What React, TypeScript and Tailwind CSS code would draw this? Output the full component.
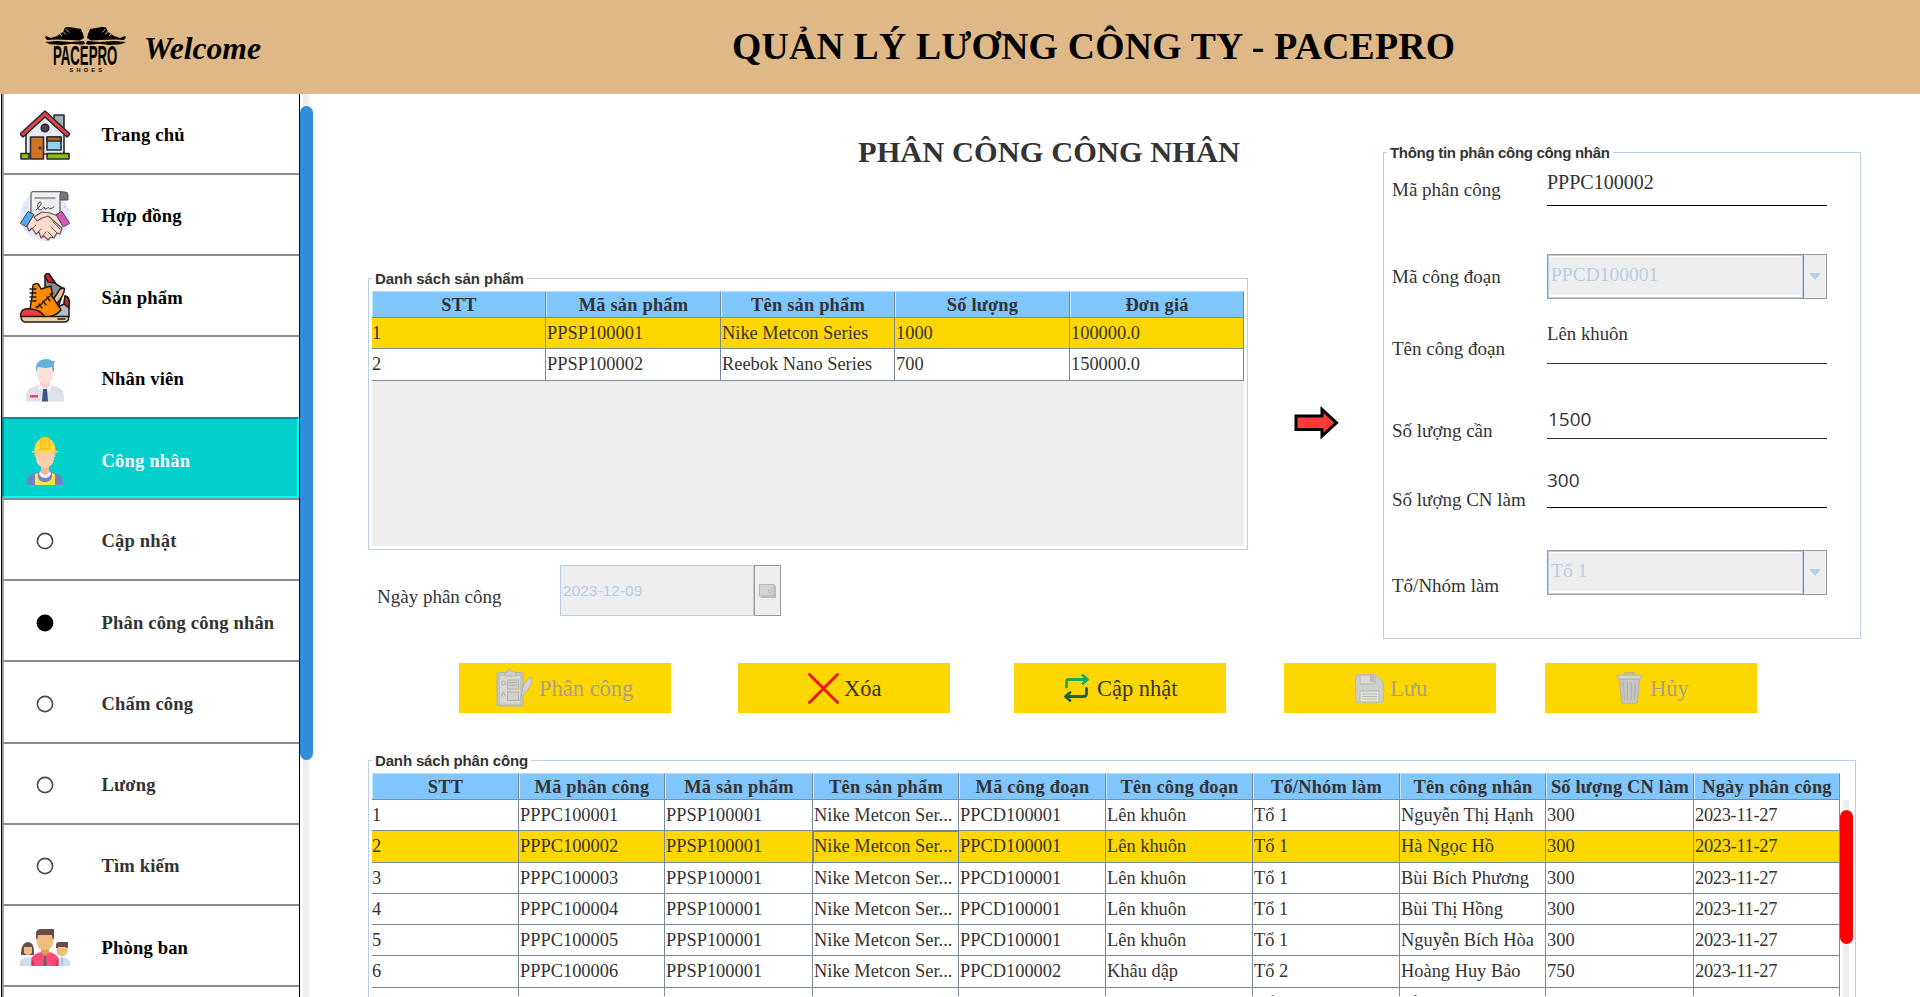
import type { ReactNode } from "react";

const serif = "font-['Liberation_Serif',serif]";
const sans = "font-['Liberation_Sans',sans-serif]";

function Logo() {
  return (
    <svg width="84" height="50" viewBox="0 0 84 50" className="block">
      <g>
        <path d="M1 11.500 2 10 7 12 13 10 19 6 21 1.500 25 1 37 3 39 8 40 12 36 14.500 27 14 12 13.500 3 14Z" fill="#000" />
        <path d="M1 16 13 15 27 16 40 15 41 18 38 18.800 28 17.800 18 19 6 18.300Z" fill="#000" />
        <path d="M14 6 18 10M18 4.500 22 8.500M21.500 3 25 6.500" stroke="#deb887" strokeWidth="1" />
      </g>
      <g transform="translate(83 0) scale(-1 1)">
        <path d="M1 11.500 2 10 7 12 13 10 19 6 21 1.500 25 1 37 3 39 8 40 12 36 14.500 27 14 12 13.500 3 14Z" fill="#000" />
        <path d="M1 16 13 15 27 16 40 15 41 18 38 18.800 28 17.800 18 19 6 18.300Z" fill="#000" />
        <path d="M14 6 18 10M18 4.500 22 8.500M21.500 3 25 6.500" stroke="#deb887" strokeWidth="1" />
      </g>
      <text transform="translate(9 38.500) scale(0.480 1)" fontFamily="Liberation Sans, sans-serif" fontWeight="700" fontSize="27.500">PACEPRO</text>
      <text x="25.500" y="46.300" fontFamily="Liberation Sans, sans-serif" fontWeight="700" fontSize="5.600" letterSpacing="3.200">SHOES</text>
    </svg>
  );
}

function HouseIcon() {
  return (
    <svg width="50" height="50" viewBox="0 0 50 50" stroke="#2a2a30" strokeWidth="1.6" strokeLinejoin="round">
      <path d="M34 5h10v18l-10-8z" fill="#9fb0b8" />
      <path d="M6 44V23L25 6l19 17v21z" fill="#e9e9f2" />
      <path d="M25 1 50 24l-3 3L25 7 3 27l-3-3z" fill="#e5404a" />
      <circle cx="25" cy="18" r="3.8" fill="#4a4452" />
      <path d="M1 43.5h8v5.500H1zM27 43.500h22v5.500H27z" fill="#84c00c" />
      <path d="M10.500 27h13v22h-13z" fill="#cf7420" />
      <path d="M27 27h14v13H27z" fill="#8fd2ef" />
      <path d="M27 27h14v4H27z" fill="#b5651d" />
      <circle cx="20" cy="38" r=".7" />
    </svg>
  );
}

function ContractIcon() {
  return (
    <svg width="50" height="50" viewBox="0 0 50 50" strokeLinejoin="round" strokeLinecap="round">
      <circle cx="25" cy="25" r="25" fill="#e4ebff" />
      <path d="M40 1h5q3 0 3 3v5h-8z" fill="#777" stroke="#555" />
      <path d="M11 25V3q0-2.500 3-2.500h28q-2 1-2 3.500v22z" fill="#efefef" stroke="#666" strokeWidth="1.300" />
      <path d="M15 7h20" stroke="#555" strokeWidth="1.200" />
      <path d="M16 19c4-3 7-8 4-8s-3 8 0 8 3-3 4-3 0 3 2 2 2-2 3-1 2 1 5-1" fill="none" stroke="#444" />
      <path d="M12 24 26 22l14 3-3 13-10 10-6-1L9 37z" fill="#ffdccd" />
      <path d="M13 24 7 35l2 5 3-3 4 6 3-2 2 6 3-2 4 4 3-3 3 1 3-5 3 1 2-6-14-12-6 2-5 3-3-4 8-5 8 1 8 3" fill="#ffdccd" stroke="#6b5550" strokeWidth="1.200" />
      <path d="M12 38l4-4M16 43l5-5M22 46l4-5M33 46l-5-5M37 42l-6-6M40 38l-7-7" stroke="#6b5550" strokeWidth="1" />
      <path d="M0.500 32 8 20.500l6 3L6.500 35.500z" fill="#55a8ee" stroke="#444" />
      <path d="M49.500 32 42 20.500l-6 3L43 35.500z" fill="#d857b5" stroke="#444" />
      <circle cx="6" cy="17" r=".8" fill="#e79bd2" />
      <circle cx="45" cy="16" r=".8" fill="#86b9ee" />
    </svg>
  );
}

function ShoesIcon() {
  return (
    <svg width="50" height="50" viewBox="0 0 50 50" stroke="#221a18" strokeWidth="1.500" strokeLinejoin="round" strokeLinecap="round">
      <path d="M25 3q1-3 4-2l7 10 8 5-5 16-14-13z" fill="#8b8f96" />
      <path d="M25 3q1-3 4-2l6 9-7-1z" fill="#d92231" />
      <path d="M44 15q2 5-9 18l-4-3 9-14z" fill="#e2c49c" />
      <path d="M36 35l8-4 1-8q4 1 4 5v16H30z" fill="#b5bcc4" />
      <path d="M44 31l1-8q4 1 4 5v7z" fill="#d92231" />
      <path d="M13 12q4-3 6 0l2 4 10-3q1 5 1 10l9 14q-6 8-22 7L10 36l2-12z" fill="#ff8a00" />
      <path d="M1 40q1-5 10-4 10 1 14 8H2q-2-1-1-4z" fill="#f23a37" />
      <path d="M1 43.500h47.500v3q-1 2.500-4 2.500H5q-4-1-4-5.500z" fill="#f0d0a4" />
      <path d="M10 16h6M10 20h6M10 24h6M10 28h6M16 34l4-2M19 31l3 4M23 28l3 4M27 24l3 4M30 21l3 4M17 35 33 20" strokeWidth="1.300" fill="none" />
      <path d="M38 46h7" />
    </svg>
  );
}

function StaffIcon() {
  return (
    <svg width="50" height="50" viewBox="0 0 50 50">
      <path d="M20 25h10v9l-5 5-5-5z" fill="#f7cfc8" />
      <path d="M6 47.500V42q0-7 7-9l7-2 5 6 5-6 7 2q7 2 7 9v5.500z" fill="#dce2ec" />
      <path d="M16.500 14h17v5q0 10-8.500 11-8.500-1-8.500-11z" fill="#fde0da" />
      <path d="M16 18V13q1-8 11-8 3 0 5 2h3l-1 3v8q-2-1-2-5-6 2-14 0-1 3-2 5z" fill="#66b0dc" />
      <path d="M20 31l5 4-4 4-3-6zM30 31l-5 4 4 4 3-6z" fill="#eef1f6" />
      <path d="M23 35h4l1 12.500h-6z" fill="#3e5580" />
      <path d="M10 41h8v2.500h-8z" fill="#f0435c" />
    </svg>
  );
}

function WorkerIcon() {
  return (
    <svg width="50" height="50" viewBox="0 0 50 50">
      <path d="M21 27h8v9l-4 4-4-4z" fill="#f5b790" />
      <path d="M6.500 49q0-10 7-11.500l7-2.500 4.500 4 4.500-4 7 2.500q7 1.500 7 11.500z" fill="#7184bd" />
      <path d="M16 15h18v8q-1 8-9 9-8-1-9-9z" fill="#ffcfac" />
      <path d="M14.500 16h2v5h-2zM33.500 16h2v5h-2z" fill="#f5b790" />
      <path d="M14.500 15q0-12 10.500-13.500Q35.500 3 35.500 15H38v1.500H12V15z" fill="#ffd944" />
      <path d="M20.500 2q4.500-1.800 9 0v11q-4.500 1.500-9 0z" fill="#ffca28" stroke="#f7b517" strokeWidth=".8" />
      <path d="M15 49V38l3-1v4q1 5 7 5t7-5v-4l3 1v11z" fill="#ffe04d" />
      <path d="M20 35l5 4 5-4 1 3q-2 4-6 4t-6-4z" fill="#eef1f7" />
    </svg>
  );
}

function TeamIcon() {
  return (
    <svg width="50" height="50" viewBox="0 0 50 50">
      <path d="M1 29q1-10 7-10 6 0 6 10v3H1z" fill="#6b4a4a" />
      <path d="M4 24h8v6q-4 4-8 0z" fill="#f2bd84" />
      <path d="M0 43v-4q1-4 8-5 6 1 7 5v4z" fill="#cfdcf0" />
      <path d="M36.500 22h11v7q-2 4-5.500 4.500-5-1-5.500-4.500z" fill="#f2bd84" />
      <path d="M36 25v-3q0-3 3-3h9v6h-2v-1h-8v1z" fill="#6b4a4a" />
      <path d="M34 43v-5q3-3 8-4 7 1 8 5v4z" fill="#cfdcf0" />
      <path d="M41.500 35h1v8h-1z" fill="#8aa2c8" />
      <path d="M21 24h8v9h-8z" fill="#dda05e" />
      <path d="M16.500 12h17v6q-1 9-8.500 9-7.500 0-8.500-9z" fill="#f2bd7c" />
      <path d="M16 16v-5q0-5 5-5h13v10q-2 0-2-4H18q0 4-2 4z" fill="#6b4a4a" />
      <path d="M11.500 43v-8q2-4 9-6l4.500 4 4.500-4q7 2 9 6v8z" fill="#ff4b78" />
      <path d="M11.500 43v-7l3 3v4zM38.500 43v-7l-3 3v4z" fill="#d8365f" />
      <path d="M24 33h2l.5 10h-3z" fill="#5d6675" />
    </svg>
  );
}

function Dot({ filled = false }: { filled?: boolean }) {
  return (
    <svg width="50" height="50" viewBox="0 0 50 50">
      <circle cx="25" cy="25" r="7.600" fill={filled ? "#000" : "#fff"} stroke={filled ? "#000" : "#4a4a4a"} strokeWidth="1.600" />
    </svg>
  );
}

type MenuItem = { label: string; icon: ReactNode; tone: string; active?: boolean };

const menu: MenuItem[] = [
  { label: "Trang chủ", icon: <HouseIcon />, tone: "text-black" },
  { label: "Hợp đồng", icon: <ContractIcon />, tone: "text-black" },
  { label: "Sản phẩm", icon: <ShoesIcon />, tone: "text-black" },
  { label: "Nhân viên", icon: <StaffIcon />, tone: "text-black" },
  { label: "Công nhân", icon: <WorkerIcon />, tone: "text-white", active: true },
  { label: "Cập nhật", icon: <Dot />, tone: "text-[#333]" },
  { label: "Phân công công nhân", icon: <Dot filled />, tone: "text-[#333]" },
  { label: "Chấm công", icon: <Dot />, tone: "text-[#333]" },
  { label: "Lương", icon: <Dot />, tone: "text-[#333]" },
  { label: "Tìm kiếm", icon: <Dot />, tone: "text-[#333]" },
  { label: "Phòng ban", icon: <TeamIcon />, tone: "text-black" },
  { label: "", icon: null, tone: "text-black" },
];

function Sidebar() {
  return (
    <aside className="flex w-[313px] shrink-0 overflow-hidden">
      <nav className="ml-px w-[299px] overflow-hidden border-x border-black">
        <div className="-mt-[2.500px]">
          {menu.map((item, i) => (
            <div
              key={i}
              className={
                item.active
                  ? "flex h-[81.250px] items-center border-2 border-t-[#00918f] border-r-[#00ffff] border-b-[#00ffff] border-l-[#00918f] bg-[#00d1cd] pt-[7px] pl-4"
                  : "flex h-[81.250px] items-center border-t-2 border-l-2 border-t-[#8c8c8c] border-l-[#a3a0a0] bg-white pt-1 pl-4"
              }
            >
              <div className="w-[81.500px]">{item.icon}</div>
              <span className={`text-[18.600px] font-bold tracking-[0.150px] whitespace-nowrap ${item.tone}`}>{item.label}</span>
            </div>
          ))}
        </div>
      </nav>
      <div className="flex w-[13px] flex-col items-center bg-[linear-gradient(90deg,#fff_3px,#eee_3px,#eee_9px,#fff_9px)] pt-3">
        <div className="h-[654px] w-[13px] rounded-full bg-[#308fd8]" />
      </div>
    </aside>
  );
}

function Group({ title, className, legendClass = "", children }: { title: string; className: string; legendClass?: string; children: ReactNode }) {
  return (
    <fieldset className={`border border-[#b8cfe5] ${className}`}>
      <legend className={`ml-[3px] h-[18px] px-[3px] text-[15px] leading-[20px] font-bold whitespace-nowrap text-[#333] ${sans} ${legendClass}`}>{title}</legend>
      {children}
    </fieldset>
  );
}

type TableProps = {
  cols: string;
  heads: string[];
  rows: string[][];
  selected: number;
  focusCol?: number;
};

function Table({ cols, heads, rows, selected, focusCol = -1 }: TableProps) {
  return (
    <div className="text-[18.400px] text-[#333]">
      <div className={`grid h-[27px] ${cols} border-b border-[#7a8a99]`}>
        {heads.map((h) => (
          <div key={h} className="flex items-center justify-center border-t border-r border-l border-t-[#b4dcff] border-r-[#7a8a99] border-l-[#c9e6ff] bg-[#80c6ff] leading-[24px] font-bold tracking-[0.200px] whitespace-nowrap">
            {h}
          </div>
        ))}
      </div>
      {rows.map((r, i) => (
        <div key={i} className={`grid h-[31.250px] ${cols} ${i === selected ? "bg-[#ffd700]" : "bg-white"}`}>
          {r.map((c, j) => (
            <div
              key={j}
              className={
                i === selected && j === focusCol
                  ? "flex items-center overflow-hidden border border-[#6382bf] pb-px leading-[24px] whitespace-nowrap"
                  : `flex items-center overflow-hidden border-r border-b border-[#7a8a99] leading-[24px] whitespace-nowrap ${j === 0 ? "pl-0" : "pl-px"} ${/^\d{4}-/.test(c) ? "tracking-[-0.300px]" : ""}`
              }
            >
              {c}
            </div>
          ))}
        </div>
      ))}
    </div>
  );
}

function Combo({ value, className }: { value: string; className: string }) {
  return (
    <div className={`flex h-[45px] w-[280px] border border-[#9a9a9a] bg-[#eee] ${className}`}>
      <div className="w-[256px] border-r border-[#7a8a99] shadow-[inset_1px_1px_0_#b8cfe5,inset_-1px_-1px_0_#b8cfe5,inset_0_-3px_0_#fff,inset_0_2px_0_#fff]">
        <div className="pt-[8px] pl-[3px] text-[19.500px] leading-[24px] text-[#b8cfe5]">{value}</div>
      </div>
      <div className="flex grow items-center justify-center">
        <div className="size-0 border-x-[6.500px] border-t-[7px] border-x-transparent border-t-[#b8cfe5]" />
      </div>
    </div>
  );
}

function Field({ label, height, labelPad, children }: { label: string; height: string; labelPad: string; children: ReactNode }) {
  return (
    <div className={`flex items-start pl-2 ${height}`}>
      <label className={`w-[155px] shrink-0 text-[19px] leading-[24px] whitespace-nowrap ${labelPad}`}>{label}</label>
      {children}
    </div>
  );
}

function ClipboardIcon() {
  return (
    <svg width="37" height="38" viewBox="0 0 37 38" fill="#cfcfcb" stroke="#b3b3ae" strokeWidth="1">
      <rect x="1" y="3.500" width="26" height="33.500" rx="1.500" fill="#c4c4c0" />
      <rect x="4" y="7" width="20" height="27.500" fill="#d6d6d2" stroke="none" />
      <path d="M9 3h3q0-2.500 2-2.500T16 3h4v4H9z" />
      <circle cx="7.500" cy="14" r="2" fill="none" />
      <rect x="11.500" y="11" width="11" height="9" />
      <path d="M13 13.500h8M13 16h8M13 27h8M13 29.500h5" />
      <path d="M5.500 27.500 7.500 23l2 4.500" fill="none" />
      <rect x="11.500" y="23" width="11" height="8.500" />
      <path d="M36 8q-7 3-9 10l-2 9 3-2q8-7 8-17zM25 27l-1 5" fill="#d2d2ce" />
    </svg>
  );
}

function CrossIcon() {
  return (
    <svg width="31" height="31" viewBox="0 0 31 31">
      <path d="M1.500 1.500 29.500 29.500M29.500 1.500 1.500 29.500" stroke="#f01818" strokeWidth="3" strokeLinecap="round" />
    </svg>
  );
}

function UpdateIcon() {
  return (
    <svg width="25" height="28" viewBox="0 0 25 28" fill="none" strokeWidth="2.800" strokeLinecap="round" strokeLinejoin="round">
      <path d="M2.500 13V8q0-2.500 2.500-2.500h17M19 1.500l4.500 4L19 9.500" stroke="#13ad5b" />
      <path d="M22.500 14.500v5q0 3-2.500 3H2.500M6 18.500l-4.500 4 4.500 4" stroke="#1c6148" />
    </svg>
  );
}

function SaveIcon() {
  return (
    <svg width="29" height="29" viewBox="0 0 29 29" stroke="#b9b9b4">
      <path d="M2 .7h19l7.300 7.300v19q0 1.300-1.300 1.300H2Q.7 28.300.7 27V2Q.7.7 2 .7z" fill="#cdcdca" />
      <path d="M5 1h15v9H5z" fill="#d8d8d5" />
      <path d="M15.500 2.500h3v5h-3z" fill="#bcbcb8" />
      <path d="M5 17h19v11H5z" fill="#e0e0dd" />
      <path d="M7 20h15M7 22.500h15M7 25h15" />
    </svg>
  );
}

function TrashIcon() {
  return (
    <svg width="25" height="32" viewBox="0 0 25 32" stroke="#b3b3ae">
      <path d="M8 3V1h9v2" fill="none" strokeWidth="1.300" />
      <path d="M2.500 7h20l-2 23q-.2 1.300-1.500 1.300H6q-1.300 0-1.500-1.300z" fill="#c6c6c2" />
      <path d="M.7 3h23.600v4H.7z" fill="#d3d3cf" />
      <path d="M6.500 10l1 18M10.500 10v18M14.500 10v18M18.500 10l-1 18" strokeWidth="1.200" />
    </svg>
  );
}

function ActionButton({ icon, label, className, disabled = false }: { icon: ReactNode; label: string; className: string; disabled?: boolean }) {
  return (
    <button className={`flex h-[50px] w-[212px] shrink-0 items-center bg-[#ffd700] text-[22.500px] leading-[28px] whitespace-nowrap ${disabled ? "text-[#a8a08c]" : "text-[#333]"} ${className}`}>
      {icon}
      <span className="pt-0.5">{label}</span>
    </button>
  );
}

const products = [
  ["1", "PPSP100001", "Nike Metcon Series", "1000", "100000.0"],
  ["2", "PPSP100002", "Reebok Nano Series", "700", "150000.0"],
];

const nike = "Nike Metcon Ser...";
const assignments = [
  ["1", "PPPC100001", "PPSP100001", nike, "PPCD100001", "Lên khuôn", "Tổ 1", "Nguyễn Thị Hạnh", "300", "2023-11-27"],
  ["2", "PPPC100002", "PPSP100001", nike, "PPCD100001", "Lên khuôn", "Tổ 1", "Hà Ngọc Hồ", "300", "2023-11-27"],
  ["3", "PPPC100003", "PPSP100001", nike, "PPCD100001", "Lên khuôn", "Tổ 1", "Bùi Bích Phương", "300", "2023-11-27"],
  ["4", "PPPC100004", "PPSP100001", nike, "PPCD100001", "Lên khuôn", "Tổ 1", "Bùi Thị Hồng", "300", "2023-11-27"],
  ["5", "PPPC100005", "PPSP100001", nike, "PPCD100001", "Lên khuôn", "Tổ 1", "Nguyễn Bích Hòa", "300", "2023-11-27"],
  ["6", "PPPC100006", "PPSP100001", nike, "PPCD100002", "Khâu dập", "Tổ 2", "Hoàng Huy Bảo", "750", "2023-11-27"],
  ["7", "PPPC100007", "PPSP100001", nike, "PPCD100002", "Khâu dập", "Tổ 2", "Hồng Thị", "750", "2023-11-27"],
];

export default function App() {
  return (
    <div className={`flex h-[997px] w-[1920px] flex-col overflow-hidden bg-white ${serif}`}>
      <header className="flex h-[94px] shrink-0 bg-[#deb887]">
        <div className="pt-[26px] pl-[44px]">
          <Logo />
        </div>
        <div className="w-[604px] pt-[29px] pl-4 text-[31.600px] leading-[40px] font-bold text-black italic">Welcome</div>
        <h1 className="pt-[22px] text-[37.700px] leading-[48px] font-bold tracking-[0.230px] whitespace-nowrap text-black">QUẢN LÝ LƯƠNG CÔNG TY - PACEPRO</h1>
      </header>

      <div className="flex min-h-0 grow">
        <Sidebar />
        <main className="ml-[55px] flex grow flex-col text-[#333]">
          <div className="flex h-[569px] shrink-0">
            <section className="w-[879px] shrink-0">
              <h2 className="h-[175px] pt-[38px] pl-[490px] text-[30.400px] leading-[40px] font-bold tracking-[0.070px] whitespace-nowrap">PHÂN CÔNG CÔNG NHÂN</h2>
              <Group title="Danh sách sản phẩm" className="h-[281px]" legendClass="tracking-[-0.070px]">
                <div className="mx-[3px] mt-[4px] h-[255px] bg-[#eee]">
                  <Table cols="grid-cols-[174px_175px_174px_175px_174px]" heads={["STT", "Mã sản phẩm", "Tên sản phẩm", "Số lượng", "Đơn giá"]} rows={products} selected={0} />
                </div>
              </Group>
              <div className="flex pt-[15px] pl-[9px]">
                <label className="w-[183px] pt-[20px] text-[19px] leading-[24px]">Ngày phân công</label>
                <div className={`flex h-[51px] w-[194px] items-center border border-[#b8cfe5] bg-[#eee] pt-px pl-[2px] text-[15.500px] text-[#b8cfe5] ${sans}`}>2023-12-09</div>
                <div className="flex h-[51px] w-[27px] items-center justify-center border border-[#999] bg-[#eee]">
                  <svg width="17" height="14" viewBox="0 0 17 14">
                    <rect x="1.500" y="1.500" width="15.500" height="12.500" fill="#bdbdbd" />
                    <rect x=".5" y=".5" width="14.500" height="11.500" fill="#d2d2d2" stroke="#b8b8b8" />
                    <circle cx="11" cy="7.500" r="1.700" fill="none" stroke="#bbb" />
                  </svg>
                </div>
              </div>
            </section>

            <div className="w-[136px] shrink-0 pt-[312px] pl-[47px]">
              <svg width="46" height="34" viewBox="0 0 46 34">
                <path d="M2 10H28V3.500L42.500 16.800 28 30V23.500H2z" fill="#ff3a38" stroke="#000" strokeWidth="3" />
              </svg>
            </div>

            <div className="w-[478px] shrink-0 pt-[49px]">
              <Group title="Thông tin phân công công nhân" className="h-[496px] w-[478px]" legendClass="tracking-[-0.300px]">
                <div className="-mt-[7px]">
                  <Field label="Mã phân công" height="h-[70px]" labelPad="pt-[24px]">
                    <div className="h-[52px] w-[280px] border-b border-black pt-[16px] text-[20px] leading-[24px]">PPPC100002</div>
                  </Field>
                  <Field label="Mã công đoạn" height="h-[96px]" labelPad="pt-[41px]">
                    <Combo value="PPCD100001" className="mt-[30px]" />
                  </Field>
                  <Field label="Tên công đoạn" height="h-[70px]" labelPad="pt-[17px]">
                    <div className="h-[44px] w-[280px] border-b border-[#333] pt-[2px] text-[18.800px] leading-[24px]">Lên khuôn</div>
                  </Field>
                  <Field label="Số lượng cần" height="h-[66px]" labelPad="pt-[29px]">
                    <div className="h-[49px] w-[280px] border-b border-[#333] pt-[17px] pl-px font-['Open_Sans',sans-serif] text-[19px] leading-[24px]">1500</div>
                  </Field>
                  <Field label="Số lượng CN làm" height="h-[74px]" labelPad="pt-[32px]">
                    <div className="h-[52px] w-[280px] border-b border-black pt-[12px] font-['Open_Sans',sans-serif] text-[19px] leading-[24px]">300</div>
                  </Field>
                  <Field label="Tổ/Nhóm làm" height="h-[100px]" labelPad="pt-[44px]">
                    <Combo value="Tổ 1" className="mt-[20px]" />
                  </Field>
                </div>
              </Group>
            </div>
          </div>

          <div className="flex h-[88px] shrink-0">
            <ActionButton className="ml-[91px] gap-[6px] pl-[37px]" icon={<ClipboardIcon />} label="Phân công" disabled />
            <ActionButton className="ml-[67px] gap-[5px] pl-[70px]" icon={<CrossIcon />} label="Xóa" />
            <ActionButton className="ml-[64px] gap-[8px] pl-[50px]" icon={<UpdateIcon />} label="Cập nhật" />
            <ActionButton className="ml-[58px] gap-[6px] pl-[71px]" icon={<SaveIcon />} label="Lưu" disabled />
            <ActionButton className="ml-[49px] gap-[8px] pl-[72px]" icon={<TrashIcon />} label="Hủy" disabled />
          </div>

          <Group title="Danh sách phân công" className="h-[300px] w-[1488px] shrink-0" legendClass="tracking-[-0.150px]">
            <div className="mt-[4px] ml-[3px] flex">
              <div className="h-[223px] w-[1468px] shrink-0 overflow-hidden">
                <Table
                  cols="grid-cols-[147px_146px_148px_146px_147px_147px_147px_146px_148px_146px]"
                  heads={["STT", "Mã phân công", "Mã sản phẩm", "Tên sản phẩm", "Mã công đoạn", "Tên công đoạn", "Tổ/Nhóm làm", "Tên công nhân", "Số lượng CN làm", "Ngày phân công"]}
                  rows={assignments}
                  selected={1}
                  focusCol={3}
                />
              </div>
              <div className="mt-[27px] h-[240px] w-[13px] shrink-0 bg-[linear-gradient(90deg,#fff_3px,#eee_3px,#eee_9px,#fff_9px)] pt-[10px]">
                <div className="h-[134px] w-[13px] rounded-full bg-[#ff0000]" />
              </div>
            </div>
          </Group>
        </main>
      </div>
    </div>
  );
}
